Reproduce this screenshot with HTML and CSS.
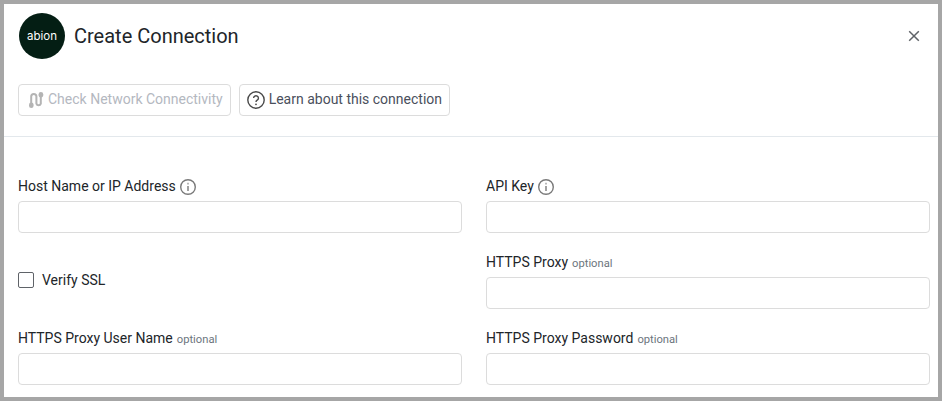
FILE: index.html
```html
<!DOCTYPE html>
<html lang="en">
<head>
    <meta charset="UTF-8">
    <meta name="viewport" content="width=device-width, initial-scale=1.0">
    <title>Create Connection</title>
    <link rel="stylesheet" href="styles.css">
</head>
<body>
    <div class="dialog">
        <div class="dialog-header">
            <div class="logo">abion</div>
            <h1>Create Connection</h1>
            <button class="close" aria-label="Close">
                <svg width="12" height="12" viewBox="0 0 12 12"><path d="M1.2 1.2 10.8 10.8M10.8 1.2 1.2 10.8" stroke="#5f6368" stroke-width="1.5" fill="none"/></svg>
            </button>
        </div>

        <div class="toolbar">
            <button class="btn btn-disabled">
                <svg width="16" height="18" viewBox="0 0 16 18" fill="none"><path d="M3.2 12V5.6a2.6 2.6 0 0 1 5.2 0v7a2.3 2.3 0 0 0 4.4 0V5" stroke="#b4b4b4" stroke-width="2"/><rect x="1" y="11.5" width="4.6" height="5.6" rx="2.3" fill="#b4b4b4"/><rect x="10.6" y="1" width="4.6" height="5.6" rx="2.3" fill="#b4b4b4"/></svg>
                <span>Check Network Connectivity</span>
            </button>
            <button class="btn">
                <svg width="18" height="18" viewBox="0 0 18 18" fill="none"><circle cx="9" cy="9" r="8.2" stroke="#4a4a4a" stroke-width="1.4"/><path d="M6.6 7.1a2.4 2.4 0 1 1 3.6 2.1c-.8.5-1.2.9-1.2 1.9" stroke="#4a4a4a" stroke-width="1.4"/><circle cx="9" cy="13.3" r=".9" fill="#4a4a4a"/></svg>
                <span>Learn about this connection</span>
            </button>
        </div>

        <form class="form-grid">
            <div class="form-group">
                <label>Host Name or IP Address
                    <svg class="info" width="16" height="16" viewBox="0 0 16 16" fill="none"><circle cx="8" cy="8" r="7.3" stroke="#7a7a7a" stroke-width="1.4"/><path d="M8 7v5" stroke="#8a8a8a" stroke-width="1.6"/><path d="M8 3.8v1.6" stroke="#a8a8a8" stroke-width="1.6"/></svg>
                </label>
                <input type="text">
            </div>
            <div class="form-group">
                <label>API Key
                    <svg class="info" width="16" height="16" viewBox="0 0 16 16" fill="none"><circle cx="8" cy="8" r="7.3" stroke="#7a7a7a" stroke-width="1.4"/><path d="M8 7v5" stroke="#8a8a8a" stroke-width="1.6"/><path d="M8 3.8v1.6" stroke="#a8a8a8" stroke-width="1.6"/></svg>
                </label>
                <input type="text">
            </div>
            <label class="check-row">
                <span class="checkbox"></span>
                Verify SSL
            </label>
            <div class="form-group">
                <label>HTTPS Proxy <span class="optional">optional</span></label>
                <input type="text">
            </div>
            <div class="form-group">
                <label>HTTPS Proxy User Name <span class="optional">optional</span></label>
                <input type="text">
            </div>
            <div class="form-group">
                <label>HTTPS Proxy Password <span class="optional">optional</span></label>
                <input type="text">
            </div>
        </form>
    </div>
</body>
</html>
```

FILE: styles.css
```css
* {
    box-sizing: border-box;
}
html, body {
    height: 100%;
}
body {
    margin: 0;
    padding: 4px;
    background: #a6a6a6;
    font-family: Roboto, "Liberation Sans", sans-serif;
    color: #212529;
    overflow: hidden;
}
.dialog {
    height: 393px;
    background: white;
    overflow: hidden;
}
.dialog-header {
    display: flex;
    align-items: center;
    height: 46px;
    margin-top: 9px;
    padding: 0 18px 0 15px;
}
.logo {
    display: flex;
    align-items: center;
    justify-content: center;
    width: 46px;
    height: 46px;
    margin-right: 9px;
    border-radius: 50%;
    background: #041e14;
    color: white;
    font-family: Inter, sans-serif;
    font-size: 11.5px;
}
h1 {
    flex: 1;
    margin: 0;
    font-size: 20px;
    font-weight: 400;
    color: #212529;
}
.close {
    display: flex;
    padding: 0;
    border: none;
    background: none;
}
.toolbar {
    display: flex;
    gap: 8px;
    height: 78px;
    padding: 25px 14px 0;
    border-bottom: 1px solid #e3e8ec;
}
.btn {
    display: flex;
    align-items: center;
    gap: 4px;
    height: 32px;
    padding: 0 7px;
    border: 1px solid #dcdcdc;
    border-radius: 4px;
    background: white;
    font-family: inherit;
    font-size: 14px;
    color: #4a4f5c;
}
.btn span {
    padding-bottom: 2px;
}
.btn-disabled {
    color: #b4b8bf;
    padding: 0 7px 0 9px;
}
.form-grid {
    display: grid;
    grid-template-columns: 444px 444px;
    column-gap: 24px;
    row-gap: 19px;
    padding: 39px 14px 0;
}
.form-group label {
    display: flex;
    align-items: center;
    gap: 4px;
    height: 20px;
    margin-bottom: 5px;
    font-size: 14px;
}
.info {
    margin-top: 2px;
}
.optional {
    font-size: 11.2px;
    color: #6c757d;
    margin-top: 2px;
}
input[type="text"] {
    display: block;
    width: 100%;
    height: 32px;
    border: 1px solid #dcdcdc;
    border-radius: 4px;
    background: white;
}
.check-row {
    display: flex;
    align-items: center;
    align-self: center;
    gap: 8px;
    height: 22px;
    padding-bottom: 2px;
    font-size: 14px;
}
.checkbox {
    width: 16px;
    height: 16px;
    border: 1px solid #5f6368;
    border-radius: 2px;
}
```
